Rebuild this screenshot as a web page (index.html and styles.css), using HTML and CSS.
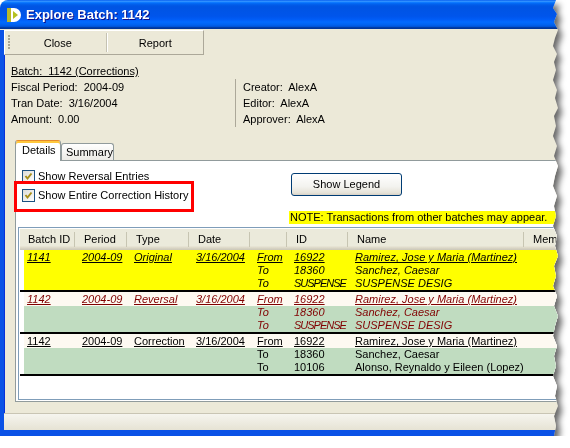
FILE: index.html
```html
<!DOCTYPE html>
<html>

<head>
    <link rel="stylesheet" href="styles.css">
</head>

<body>
    <div class="shadow">
        <div class="window">
            <div class="titlebar">
                <svg class="app-icon" width="14" height="16" viewBox="0 0 14 16">
                    <rect x="0" y="1" width="4" height="14" fill="#b9b82a" />
                    <path d="M4 1 H7 A7 7 0 0 1 7 15 H4 Z" fill="#fff" />
                    <path d="M6 4 L11 8 L6 12 Z" fill="#b4c020" />
                </svg>
                <span class="title">Explore Batch: 1142</span>
            </div>

            <div class="frame">
                <div class="toolbar">
                    <span class="grip"></span>
                    <span class="tb-btn">Close</span>
                    <span class="tb-sep"></span>
                    <span class="tb-btn">Report</span>
                </div>

                <div class="info">
                    <div class="batch-name">Batch:  1142 (Corrections)</div>
                    <div class="info-left">
                        <div class="info-line">Fiscal Period:  2004-09</div>
                        <div class="info-line">Tran Date:  3/16/2004</div>
                        <div class="info-line">Amount:  0.00</div>
                    </div>
                    <div class="info-right">
                        <div class="info-line">Creator:  AlexA</div>
                        <div class="info-line">Editor:  AlexA</div>
                        <div class="info-line">Approver:  AlexA</div>
                    </div>
                </div>

                <div class="tabs">
                    <div class="tab active">Details</div>
                    <div class="tab">Summary</div>
                </div>

                <div class="panel">
                    <div class="panel-top">
                        <div class="checks">
                            <div class="check">
                                <span class="box">
                                    <svg width="11" height="11" viewBox="0 0 11 11">
                                        <polyline points="2.5,5 4.5,7.5 8.5,2.5" fill="none" stroke="#a8901c" stroke-width="2" />
                                    </svg>
                                </span>
                                Show Reversal Entries
                            </div>
                            <div class="check">
                                <span class="box">
                                    <svg width="11" height="11" viewBox="0 0 11 11">
                                        <polyline points="2.5,5 4.5,7.5 8.5,2.5" fill="none" stroke="#a8901c" stroke-width="2" />
                                    </svg>
                                </span>
                                Show Entire Correction History
                            </div>
                        </div>
                        <div class="legend">
                            <div class="btn">Show Legend</div>
                            <div class="note">NOTE: Transactions from other batches may appear.</div>
                        </div>
                    </div>

                    <!-- red annotation around the second checkbox -->
                    <div class="highlight-box"></div>

                    <div class="grid">
                        <div class="grid-head">
                            <span class="hcell">Batch ID</span>
                            <span class="hcell">Period</span>
                            <span class="hcell">Type</span>
                            <span class="hcell">Date</span>
                            <span class="hcell"></span>
                            <span class="hcell">ID</span>
                            <span class="hcell">Name</span>
                            <span class="hcell">Memo</span>
                        </div>

                        <div class="row original">
                            <div class="line first">
                                <span>1141</span><span>2004-09</span><span>Original</span><span>3/16/2004</span>
                                <span class="dir">From</span><span>16922</span><span>Ramirez, Jose y Maria (Martinez)</span>
                            </div>
                            <div class="line">
                                <span class="dir">To</span><span>18360</span><span>Sanchez, Caesar</span>
                            </div>
                            <div class="line">
                                <span class="dir">To</span><span class="tight">SUSPENSE</span><span>SUSPENSE DESIG</span>
                            </div>
                        </div>

                        <div class="row reversal">
                            <div class="line first">
                                <span>1142</span><span>2004-09</span><span>Reversal</span><span>3/16/2004</span>
                                <span class="dir">From</span><span>16922</span><span>Ramirez, Jose y Maria (Martinez)</span>
                            </div>
                            <div class="line">
                                <span class="dir">To</span><span>18360</span><span>Sanchez, Caesar</span>
                            </div>
                            <div class="line">
                                <span class="dir">To</span><span class="tight">SUSPENSE</span><span>SUSPENSE DESIG</span>
                            </div>
                        </div>

                        <div class="row correction">
                            <div class="line first">
                                <span>1142</span><span>2004-09</span><span>Correction</span><span>3/16/2004</span>
                                <span class="dir">From</span><span>16922</span><span>Ramirez, Jose y Maria (Martinez)</span>
                            </div>
                            <div class="line">
                                <span class="dir">To</span><span>18360</span><span>Sanchez, Caesar</span>
                            </div>
                            <div class="line">
                                <span class="dir">To</span><span>10106</span><span>Alonso, Reynaldo y Eileen (Lopez)</span>
                            </div>
                        </div>
                    </div>
                </div>

                <div class="statusbar"></div>
            </div>
        </div>
    </div>
</body>

</html>
```

FILE: styles.css
```css
body {
    margin: 0;
    background-color: #fff;
    font-family: "Liberation Sans", Arial, sans-serif;
    font-size: 11px;
    color: #000;
}

.shadow {
    width: 580px;
    filter: drop-shadow(4px 5px 3px rgba(0, 0, 0, 0.6));
}

.window {
    width: 580px;
    background-color: #ece9d8;
    border-radius: 8px 8px 0 0;
    overflow: hidden;
    /* torn right edge */
    clip-path: polygon(0 0, 556px 0, 553px 8px, 557px 14px, 554px 22px, 558px 30px, 555px 38px, 553px 46px,
        557px 54px, 554px 62px, 556px 70px, 553px 80px, 557px 90px, 555px 98px, 558px 108px, 554px 116px,
        556px 126px, 553px 136px, 557px 146px, 554px 156px, 558px 166px, 555px 176px, 553px 186px,
        557px 196px, 554px 206px, 556px 216px, 553px 226px, 557px 236px, 555px 246px, 558px 256px,
        554px 266px, 556px 276px, 553px 286px, 557px 296px, 554px 306px, 558px 316px, 555px 326px,
        553px 336px, 557px 346px, 554px 356px, 556px 366px, 553px 376px, 557px 386px, 555px 396px,
        558px 406px, 554px 416px, 556px 426px, 554px 436px, 0 436px);
}

.titlebar {
    display: flex;
    align-items: center;
    height: 29px;
    padding-left: 7px;
    background: linear-gradient(to bottom, #0058ee 0%, #3593ff 4%, #288eff 6%, #127dff 8%, #036ffc 10%,
        #0262ee 14%, #0057e5 20%, #0054e3 24%, #0055eb 56%, #005bf5 66%, #026afe 76%, #0062ef 86%,
        #0052d6 92%, #0040ab 94%, #003092 100%);
}

.app-icon {
    margin-top: 1px;
}

.title {
    margin-left: 5px;
    color: #fff;
    font-size: 13px;
    font-weight: bold;
    text-shadow: 1px 1px #0f1089;
}

.frame {
    border-left: 4px solid #0b52e6;
    border-bottom: 6px solid #0b52e6;
    box-shadow: inset 1px 0 #0831d9;
}

.toolbar {
    display: flex;
    align-items: center;
    box-sizing: border-box;
    width: 200px;
    height: 25px;
    margin-top: 1px;
    border-top: 1px solid #fff;
    border-left: 1px solid #fff;
    border-right: 1px solid #aca899;
    border-bottom: 1px solid #aca899;
}

.grip {
    width: 2px;
    height: 15px;
    margin-left: 3px;
    background: repeating-linear-gradient(to bottom, #a8a593 0, #a8a593 2px, transparent 2px, transparent 3px);
}

.tb-btn {
    flex: 1;
    text-align: center;
}

.tb-sep {
    width: 1px;
    height: 19px;
    background-color: #c5c2b2;
    border-right: 1px solid #fff;
}

.info {
    display: grid;
    grid-template-columns: 224px auto;
    margin: 8px 0 0 7px;
    line-height: 16px;
}

.batch-name,
.info-line {
    white-space: pre;
}

.batch-name {
    grid-column: 1 / 3;
    text-decoration: underline;
}

.info-right {
    padding-left: 7px;
    border-left: 1px solid #aca899;
}

.tabs {
    display: flex;
    align-items: flex-end;
    height: 20px;
    margin: 13px 0 0 11px;
    position: relative;
    z-index: 1;
}

.tab {
    box-sizing: border-box;
    width: 53px;
    height: 17px;
    padding-left: 4px;
    line-height: 16px;
    border: 1px solid #919b9c;
    border-bottom: none;
    border-radius: 3px 3px 0 0;
    background: linear-gradient(to bottom, #fff, #ecebe6);
}

.tab.active {
    width: 46px;
    height: 21px;
    margin-bottom: -1px;
    padding-left: 6px;
    padding-top: 1px;
    border-top: 1px solid #e68b2c;
    box-shadow: inset 0 2px #ffc83c;
    background: #fff;
}

.panel {
    position: relative;
    margin-left: 11px;
    padding-bottom: 1px;
    border: 1px solid #919b9c;
    background-color: #fff;
}

.panel-top {
    display: flex;
    height: 66px;
}

.checks {
    width: 267px;
    padding: 9px 0 0 6px;
}

.check {
    display: flex;
    align-items: center;
    height: 13px;
    margin-bottom: 6px;
    line-height: 13px;
    white-space: nowrap;
}

.check .box {
    box-sizing: border-box;
    width: 13px;
    height: 13px;
    margin-right: 3px;
    border: 1px solid #1c5180;
    background: linear-gradient(135deg, #dcdcd7, #fff);
}

.check .box svg {
    display: block;
}

.legend {
    flex: 1;
    display: flex;
    flex-direction: column;
}

.btn {
    box-sizing: border-box;
    width: 111px;
    height: 23px;
    margin: 12px 0 0 2px;
    border: 1px solid #003c74;
    border-radius: 3px;
    background: linear-gradient(to bottom, #fff 0%, #f3f3ef 60%, #e6e3d8 90%, #d6d0c5 100%);
    text-align: center;
    line-height: 21px;
}

.note {
    height: 13px;
    margin-top: 15px;
    padding-left: 1px;
    line-height: 13px;
    background-color: #ffff00;
    white-space: nowrap;
}

.highlight-box {
    position: absolute;
    left: -2px;
    top: 20px;
    box-sizing: border-box;
    width: 180px;
    height: 31px;
    border: 3px solid #ff0000;
}

.grid {
    box-sizing: border-box;
    height: 173px;
    margin-left: 2px;
    padding: 1px;
    border: 1px solid #7f9db9;
    overflow: hidden;
    background-color: #fff;
}

.grid-head {
    display: grid;
    grid-template-columns: 55px 52px 62px 61px 37px 61px 176px 100px;
    align-items: center;
    height: 21px;
    background: linear-gradient(to bottom, #ebeadb 0%, #ebeadb 80%, #e2decd 86%, #d6d2c2 93%, #cbc7b8 100%);
}

.hcell {
    box-sizing: border-box;
    height: 15px;
    padding-left: 9px;
    line-height: 15px;
    border-right: 1px solid #c7c5b2;
    white-space: nowrap;
}

.hcell:first-child {
    padding-left: 8px;
}

.row {
    padding-left: 4px;
    border-bottom: 2px solid #000;
}

.line {
    display: grid;
    grid-template-columns: 51px 52px 62px 61px 37px 61px 176px 100px;
    height: 13px;
    line-height: 13px;
    white-space: nowrap;
    background-color: #c0dcc0;
}

.line.first {
    height: 14px;
    line-height: 14px;
    background-color: #fdf9f1;
}

.line span {
    padding-left: 7px;
}

.line span:first-child {
    padding-left: 3px;
}

.line span.dir {
    grid-column: 5;
    padding-left: 7px;
}

.line span.tight {
    letter-spacing: -1px;
}

.line.first span {
    text-decoration: underline;
}

.original .line {
    background-color: #ffff00;
    font-style: italic;
}

.reversal .line {
    color: #800000;
    font-style: italic;
}

.statusbar {
    height: 16px;
    margin-top: 11px;
    border-top: 1px solid #c9c5b4;
    background: linear-gradient(to bottom, #f6f5ef, #e6e3d4);
}
```
